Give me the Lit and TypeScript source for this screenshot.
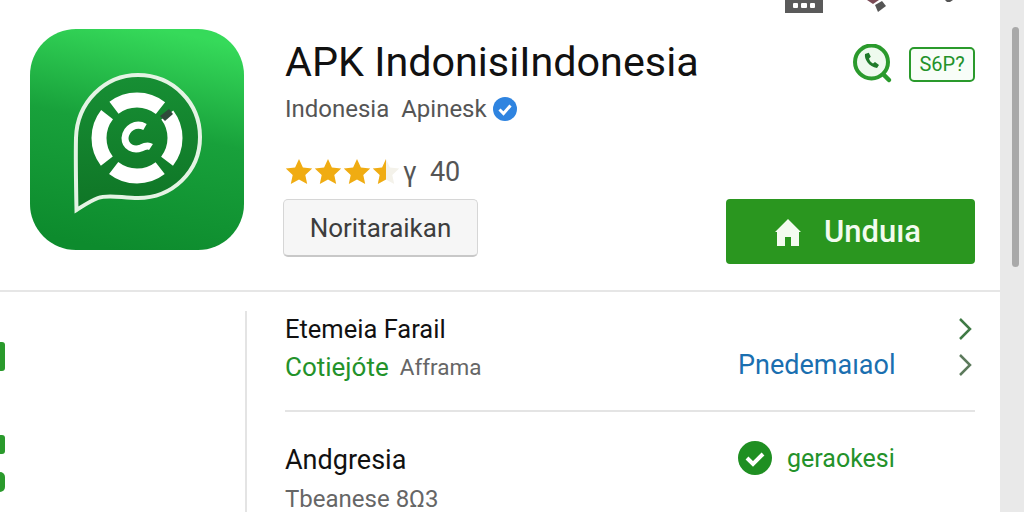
import { LitElement, html, css, svg } from 'lit';
import { customElement } from 'lit/decorators.js';

const star = (fill: string) => svg`<path d="M14 1l3.900 8.600 9.300 1-6.900 6.300 1.900 9.200L14 21.400 5.800 26.100l1.900-9.200L.8 10.600l9.300-1z" fill=${fill}/>`;

@customElement('app-root')
export class AppRoot extends LitElement {
  static styles = css`
    :host { display: block; width: 1024px; height: 512px; overflow: hidden; background: #fff; font-family: Roboto, "Liberation Sans", sans-serif; color: #111; }
    .page { display: flex; height: 512px; }
    .main { width: 1000px; display: flex; flex-direction: column; }
    .scrollbar { width: 24px; background: #e9e9e9; padding: 27px 5px 0 12px; box-sizing: border-box; }
    .thumb { height: 240px; background: #a9a9a9; border-radius: 4px; }

    .status { height: 13px; display: flex; align-items: flex-start; padding-left: 785px; }
    .status svg { display: block; }

    .hero { height: 279px; box-sizing: border-box; border-bottom: 2px solid #e6e6e6; padding: 16px 25px 0 30px; display: flex; gap: 41px; }
    .logo { width: 214px; height: 221px; flex: none; display: block; }
    .info { flex: 1; display: flex; flex-direction: column; min-width: 0; }
    .title-row { display: flex; justify-content: space-between; align-items: flex-start; height: 64px; }
    h1 { margin: 11px 0 0; font-size: 41.300px; font-weight: 400; line-height: 44px; color: #111; white-space: nowrap; }
    .tags { display: flex; align-items: center; gap: 16px; margin-top: 15px; }
    .tag { width: 66px; height: 35px; box-sizing: border-box; border: 2px solid #2a9a2c; border-radius: 5px; color: #23922a; font-size: 20px; display: flex; align-items: center; justify-content: center; background: #f8fdf8; }
    .publisher { display: flex; align-items: center; gap: 6px; font-size: 24px; color: #555; height: 30px; margin-top: 1px; }
    .publisher span { white-space: pre; }
    .rating { display: flex; align-items: center; height: 30px; margin-top: 33px; font-size: 27px; color: #555; }
    .rating svg { display: block; }
    .stars { display: flex; gap: 1px; width: 118px; }
    .actions { display: flex; justify-content: space-between; align-items: flex-start; margin-top: 12px; margin-left: -2px; }
    .rate { width: 195px; height: 58px; box-sizing: border-box; border: 1px solid #d6d6d6; border-bottom: 2px solid #c8c8c8; border-radius: 5px; background: #f6f6f6; font: inherit; font-size: 26px; color: #3d3d3d; padding: 0; }
    .download { width: 249px; height: 65px; border: none; border-radius: 4px; background: #2a961f; color: #f2fbee; font: inherit; font-size: 31px; font-weight: 500; display: flex; align-items: center; justify-content: center; gap: 22px; padding: 0 6px 0 0; }

    .lower { flex: 1; display: flex; min-height: 0; }
    .marks { width: 247px; flex: none; box-sizing: border-box; border-right: 2px solid #e4e4e4; margin-top: 19px; padding-top: 31px; display: flex; flex-direction: column; align-items: flex-start; }
    .mark { width: 5px; background: #2a9a2c; border-radius: 0 3px 3px 0; }
    .m1 { height: 29px; margin-bottom: 64px; }
    .m2 { height: 19px; margin-bottom: 18px; }
    .m3 { height: 20px; border-radius: 0 10px 10px 0; }
    .details { flex: 1; padding: 19px 25px 0 38px; min-width: 0; }
    .row { display: flex; justify-content: space-between; align-items: flex-start; }
    .first { height: 101px; border-bottom: 2px solid #e4e4e4; box-sizing: border-box; }
    .col { display: flex; flex-direction: column; }
    .name { font-size: 25.500px; color: #111; line-height: 36px; }
    .name.big { font-size: 27px; }
    .sub { font-size: 24px; line-height: 36px; color: #666; margin-top: 2px; display: flex; gap: 11px; }
    .sub.plain { margin-top: 7px; line-height: 28px; }
    .sub b { font-weight: 400; font-size: 26px; color: #23922a; }
    .sub i { font-style: normal; font-size: 22.500px; }
    .side { width: 237px; box-sizing: border-box; padding-right: 3px; display: grid; grid-template-columns: 1fr auto; grid-auto-rows: 36px; align-items: center; }
    .side svg { display: block; }
    .link { font-size: 27px; color: #1a6fb0; }
    .second { padding-top: 30px; }
    .ok { width: 237px; display: flex; align-items: center; gap: 15px; color: #23922a; font-size: 25px; height: 36px; margin-top: -2px; }
  `;

  render() {
    return html`
      <div class="page">
        <div class="main">
          <div class="status">
            <svg width="170" height="13" viewBox="0 0 170 13">
              <rect x="0" y="0" width="38" height="13" fill="#5a5a5a"/>
              <rect x="8" y="3" width="5" height="5" rx="1" fill="#fff"/><rect x="16" y="3" width="6" height="5" rx="1" fill="#fff"/><rect x="25" y="3" width="5" height="5" rx="1" fill="#fff"/>
              <path d="M82 0h12l-6 4z" fill="#7a4a55"/>
              <path d="M90 5l7-4 4 5-8 6z" fill="#555"/>
              <path d="M160 0h8l-3 2h-3z" fill="#555"/>
            </svg>
          </div>
          <div class="hero">
            <svg class="logo" viewBox="30 29 214 221">
              <defs>
                <linearGradient id="g" x1=".6" y1="0" x2=".4" y2="1"><stop offset="0" stop-color="#36da5a"/><stop offset=".45" stop-color="#18a13b"/><stop offset="1" stop-color="#0d8b2d"/></linearGradient>
                <linearGradient id="b" x1="0" y1="0" x2="0" y2="1"><stop offset="0" stop-color="#178f34"/><stop offset="1" stop-color="#0f7526"/></linearGradient>
              </defs>
              <rect x="30" y="29" width="214" height="221" rx="46" fill="url(#g)"/>
              <path d="M76.500 210C76 185 75.500 160 76 138C77 102 105 75 138 75C173 75 200 103 200 137C200 172 172 198 138 198C122 198 108 194 98 198C90 201 83 206 76.500 210Z" fill="url(#b)" stroke="#e4f3e4" stroke-width="4"/>
              <circle cx="137" cy="138" r="38" fill="none" stroke="#fff" stroke-width="15" stroke-dasharray="50 9.690" stroke-dashoffset="25"/>
              <path d="M160 116l9-7 4 5-8 7z" fill="#2f4a3a"/>
              <path d="M145 127C136 122 126 128 125 138C125 147 134 151 141 148C145 146 148 145 151 147" fill="none" stroke="#fff" stroke-width="7"/>
            </svg>
            <div class="info">
              <div class="title-row">
                <h1>APK IndonisiIndonesia</h1>
                <div class="tags">
                  <svg width="40" height="40" viewBox="0 0 40 40">
                    <circle cx="18.500" cy="18" r="16.500" fill="#eefaee" stroke="#2a9a2c" stroke-width="4"/>
                    <path d="M31 31l5 5" stroke="#2a9a2c" stroke-width="4.500" stroke-linecap="round"/>
                    <path d="M12 10c-1 5 4 13 12 14l2-3-4-3-2 1.500c-2-1-3.500-3-4-5l1.800-1.700-2-4z" fill="#1f7a2a"/>
                  </svg>
                  <div class="tag">S6P?</div>
                </div>
              </div>
              <div class="publisher">
                <span>Indonesia  Apinesk</span>
                <svg width="24" height="24" viewBox="0 0 24 24">
                  <circle cx="12" cy="12" r="12" fill="#2f84e0"/>
                  <path d="M6.500 12.500l4 4 7-8" fill="none" stroke="#fff" stroke-width="3"/>
                </svg>
              </div>
              <div class="rating">
                <div class="stars">
                  <svg width="28" height="28" viewBox="0 0 28 28">${star('#f0ac12')}</svg>
                  <svg width="28" height="28" viewBox="0 0 28 28">${star('#f0ac12')}</svg>
                  <svg width="28" height="28" viewBox="0 0 28 28">${star('#f0ac12')}</svg>
                  <svg width="28" height="28" viewBox="0 0 28 28">
                    <defs><clipPath id="half"><rect width="14" height="28"/></clipPath></defs>
                    ${star('#f4f2ea')}
                    <g clip-path="url(#half)">${star('#f0ac12')}</g>
                  </svg>
                </div>
                <span>γ&nbsp;&nbsp;40</span>
              </div>
              <div class="actions">
                <button class="rate">Noritaraikan</button>
                <button class="download">
                  <svg width="28" height="30" viewBox="0 0 28 30"><path d="M14 2L1 15h2v14h8v-9h6v9h8V15h2z" fill="#f4fbf0"/></svg>
                  Unduıa
                </button>
              </div>
            </div>
          </div>
          <div class="lower">
            <div class="marks">
              <div class="mark m1"></div>
              <div class="mark m2"></div>
              <div class="mark m3"></div>
            </div>
            <div class="details">
              <div class="row first">
                <div class="col">
                  <div class="name">Etemeia Farail</div>
                  <div class="sub"><b>Cotiejóte</b><i>Afframa</i></div>
                </div>
                <div class="side">
                  <span></span>
                  <svg width="14" height="24" viewBox="0 0 14 24"><path d="M2 2l10 10L2 22" fill="none" stroke="#3f7a45" stroke-width="2.500"/></svg>
                  <span class="link">Pnedemaıaol</span>
                  <svg width="14" height="24" viewBox="0 0 14 24"><path d="M2 2l10 10L2 22" fill="none" stroke="#5c7a5c" stroke-width="2.500"/></svg>
                </div>
              </div>
              <div class="row second">
                <div class="col">
                  <div class="name big">Andgresia</div>
                  <div class="sub plain">Tbeanese 8Ω3</div>
                </div>
                <div class="ok">
                  <svg width="34" height="34" viewBox="0 0 34 34">
                    <circle cx="17" cy="17" r="17" fill="#1f8f22"/>
                    <path d="M9 17l6 6 10-10" fill="none" stroke="#fff" stroke-width="4"/>
                  </svg>
                  geraokesi
                </div>
              </div>
            </div>
          </div>
        </div>
        <div class="scrollbar"><div class="thumb"></div></div>
      </div>
    `;
  }
}
